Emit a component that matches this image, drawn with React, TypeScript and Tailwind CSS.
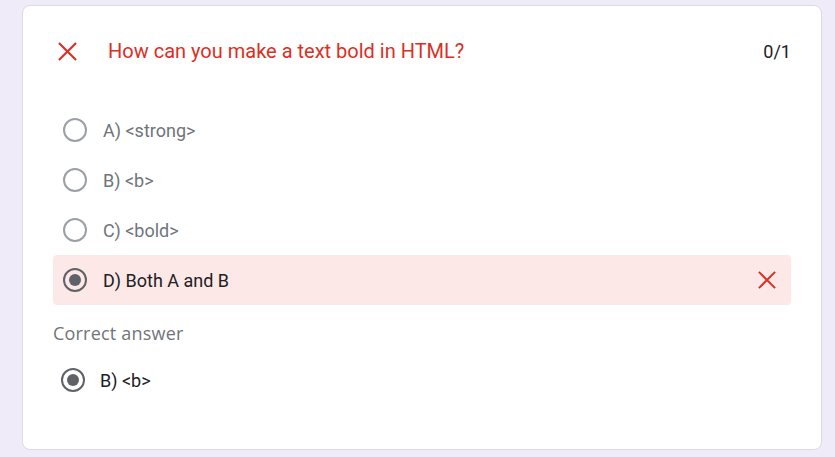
import React from 'react'

const options = ['A) <strong>', 'B) <b>', 'C) <bold>', 'D) Both A and B']
const chosen = 3

function Cross({ className }: { className?: string }) {
    return (
        <svg viewBox="0 0 20 20" className={className} fill="none" stroke="currentColor" strokeWidth="2.2">
            <path d="M1 1 L19 19 M19 1 L1 19" />
        </svg>
    )
}

function Radio({ on, muted }: { on: boolean; muted?: boolean }) {
    return (
        <div className={`w-[24px] h-[24px] rounded-full border-2 flex items-center justify-center shrink-0 ${on ? 'border-[#5f6368]' : muted ? 'border-[#9aa0a6]' : 'border-[#5f6368]'}`}>
            {on && <div className="w-[12px] h-[12px] rounded-full bg-[#5f6368]" />}
        </div>
    )
}

export default function App() {
    return (
        <main className="w-[835px] h-[457px] bg-[#f0ebf8] pt-[5px] pl-[22px] pr-[13px] overflow-hidden" style={{ fontFamily: 'Roboto, Arial, sans-serif' }}>
            <div className="h-[445px] bg-white border border-[#dadce0] rounded-[8px] px-[30px] pt-[25px]">
                {/* header */}
                <div className="flex items-center h-[40px]">
                    <Cross className="w-[19px] h-[19px] text-[#d93025] ml-[5px]" />
                    <div className="ml-[31px] text-[20px] text-[#d93025] flex-1">How can you make a text bold in HTML?</div>
                    <div className="text-[18px] text-[#202124]">0/1</div>
                </div>

                <div className="mt-[34px]">
                    {options.map((o, i) => {
                        const sel = i === chosen
                        return (
                            <div key={o} className={`flex items-center h-[50px] pl-[10px] pr-[15px] rounded-[4px] ${sel ? 'bg-[#fce8e6]' : ''}`}>
                                <Radio on={sel} muted />
                                <span className={`ml-[16px] text-[18px] flex-1 ${sel ? 'text-[#202124]' : 'text-[#70757a]'}`}>{o}</span>
                                {sel && <Cross className="w-[18px] h-[18px] text-[#d93025]" />}
                            </div>
                        )
                    })}
                </div>

                <div className="mt-[15px] text-[18px] font-medium text-[#70757a] tracking-[0.2px]" style={{ fontFamily: '"Open Sans", Arial, sans-serif' }}>Correct answer</div>

                <div className="flex items-center h-[50px] pl-[8px] mt-[8px]">
                    <Radio on />
                    <span className="ml-[15px] text-[18px] text-[#202124]">B) &lt;b&gt;</span>
                </div>
            </div>
        </main>
    )
}
